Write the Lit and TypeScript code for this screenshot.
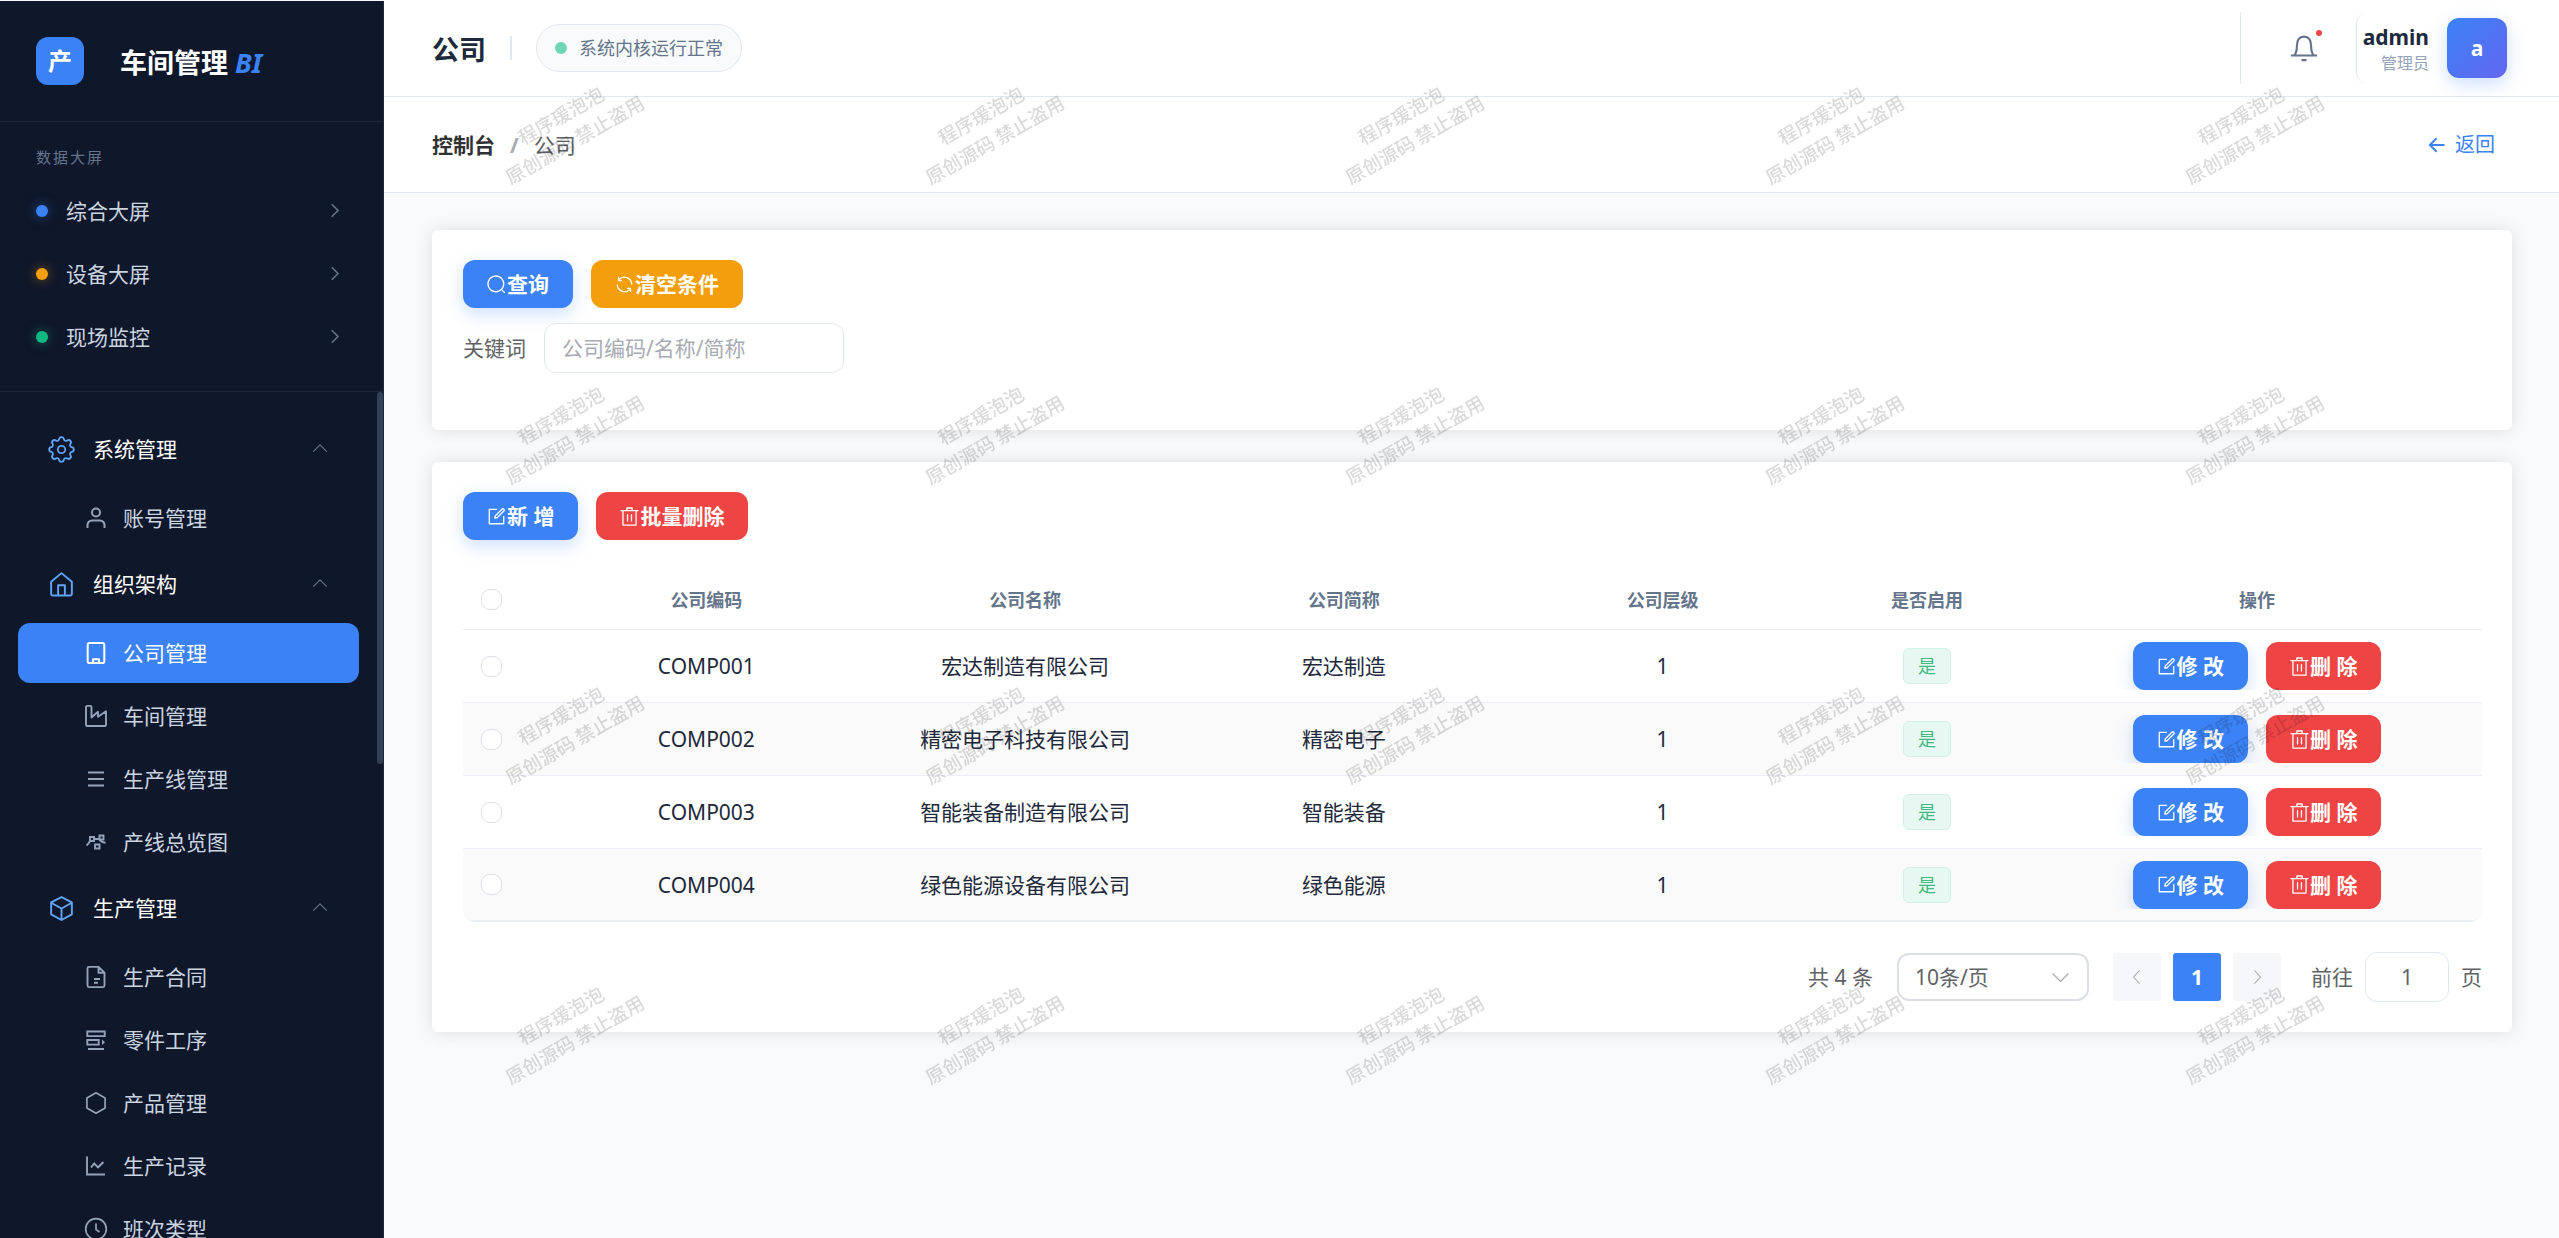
import { LitElement, html, css, svg } from "lit";
import { customElement, property } from "lit/decorators.js";
import { classMap } from "lit/directives/class-map.js";

const s = (body: unknown, box = "0 0 24 24") =>
  html`<svg viewBox=${box} fill="none" stroke="currentColor" aria-hidden="true">${body}</svg>`;
const e = (body: unknown) =>
  html`<svg viewBox="0 0 1024 1024" fill="currentColor" aria-hidden="true">${body}</svg>`;

// Eight rounded lobes joined by shallow concave arcs.
const gearPath = () => {
  const at = (deg: number) => {
    const a = (deg * Math.PI) / 180;
    return `${(12 + 9.3 * Math.cos(a)).toFixed(2)} ${(12 + 9.3 * Math.sin(a)).toFixed(2)}`;
  };
  let d = `M${at(-13)}`;
  for (let k = 0; k < 8; k++) {
    d += `A2.100 2.100 0 0 1 ${at(k * 45 + 13)}A1.900 1.900 0 0 0 ${at(k * 45 + 32)}`;
  }
  return d + "Z";
};

const icons: Record<string, unknown> = {
  gear: s(svg`<g stroke-width="1.6" stroke-linejoin="round"><circle cx="12" cy="12" r="3.3"/><path d=${gearPath()}/></g>`),
  home: s(svg`<path stroke-width="1.7" stroke-linejoin="round" d="M2.800 9.600 12 1.900l9.200 7.700V20.500a1.300 1.300 0 0 1-1.300 1.300H4.100a1.300 1.300 0 0 1-1.300-1.300ZM9 21.500V12.700h6v8.800"/>`),
  cube: s(svg`<path stroke-width="1.700" stroke-linejoin="round" d="M12 1.800 21.200 6.500v10.700L12 22.200 2.800 17.200V6.500ZM2.800 6.900 12 12l9.200-5.100M12 12v10"/>`),
  user: s(svg`<g stroke-width="2"><circle cx="12" cy="6.500" r="4"/><path d="M3.500 22v-3a4.500 4.500 0 0 1 4.500-4.500h8a4.500 4.500 0 0 1 4.500 4.500v3"/></g>`),
  office: s(svg`<path stroke-width="2" stroke-linejoin="round" d="M5.500 2h13a1.800 1.800 0 0 1 1.800 1.800v16.400a1.800 1.800 0 0 1-1.800 1.800h-13a1.800 1.800 0 0 1-1.800-1.800V3.800A1.800 1.800 0 0 1 5.500 2ZM9 21.500v-3.300h6v3.300"/>`),
  factory: s(svg`<path stroke-width="1.900" stroke-linejoin="round" d="M3.300 1.900h2.900a1.300 1.300 0 0 1 1.300 1.300v10.300L14 7.800v5l8-5.600v13.500a1.300 1.300 0 0 1-1.300 1.300H3.300A1.300 1.300 0 0 1 2 20.700V3.200a1.300 1.300 0 0 1 1.300-1.300Z"/>`),
  lines: s(svg`<path stroke-width="1.900" d="M4 5.500h16M4 12h16M4 18.500h16"/>`),
  flow: s(svg`<g stroke-width="1.900"><path d="M6 7h4v4H6ZM15.500 5.500h4v4h-4ZM11 14.500h4.500v4H11ZM10 9h5.500M6 11q-1.500 3-3.500 4.500M15 9.500q3 3 6.500 3.300"/></g>`),
  doc: s(svg`<path stroke-width="1.900" stroke-linejoin="round" d="M14.500 1.900H5a1.500 1.500 0 0 0-1.500 1.500v17.200A1.500 1.500 0 0 0 5 22.100h14a1.500 1.500 0 0 0 1.500-1.500V7.700Zm0 0v5.800h6M10 14h6M10 17.800h4"/>`),
  rows: s(svg`<g stroke-width="1.900"><path d="M3.300 3.500h17.400v4.600H3.300ZM3.300 12h11.400v4.600H3.300ZM4 21h16"/><path d="M18 11.500 21 14.300 18 17Z" fill="currentColor" stroke="none"/></g>`),
  hex: s(svg`<path stroke-width="1.700" stroke-linejoin="round" d="M12 1.800 21.100 6.900v10.200L12 22.200 2.900 17.100V6.900Z"/>`),
  trend: s(svg`<path stroke-width="1.900" d="M3 2.500V20.500H21M7 13.500 10.200 9.500l3.800 3.800L19.500 8"/>`),
  clock: s(svg`<g stroke-width="1.700"><circle cx="12" cy="12" r="10.300"/><path d="M12 6.500v6l3.500 2.500"/></g>`),
  up: s(svg`<path stroke-width="1.500" d="M3 15.500 12 6.500l9 9"/>`),
  down: s(svg`<path stroke-width="1.500" d="M3 7.500l9 9 9-9"/>`),
  left: s(svg`<path stroke-width="1.500" d="M15.500 3 7.500 12l8 9"/>`),
  right: s(svg`<path stroke-width="1.500" d="M8.500 3l8 9-8 9"/>`),
  chevron: s(svg`<path stroke-width="2.600" d="M6 2l10 10L6 22"/>`),
  back: s(svg`<path stroke-width="2.600" d="M22 12H3M11.500 3 2.500 12l9 9"/>`),
  bell: s(svg`<path stroke-width="1.700" d="M1.500 18H22.500M4 18Q6.300 15.800 6.300 10.500 6.300 2.900 12 2.900T17.700 10.500Q17.700 15.800 20 18M10 21.700h4"/>`),
  search: e(svg`<path d="m795.904 750.72 124.992 124.928a32 32 0 0 1-45.248 45.248L750.656 795.904a416 416 0 1 1 45.248-45.248zM480 832a352 352 0 1 0 0-704 352 352 0 0 0 0 704z"/>`),
  refresh: e(svg`<path d="M771.776 794.880A384 384 0 0 1 128 512h64a320 320 0 0 0 555.712 216.448H654.720a32 32 0 1 1 0-64h149.056a32 32 0 0 1 32 32v148.928a32 32 0 1 1-64 0v-50.560zM276.288 295.616h92.992a32 32 0 0 1 0 64H220.160a32 32 0 0 1-32-32V178.560a32 32 0 0 1 64 0v50.560A384 384 0 0 1 896.128 512h-64a320 320 0 0 0-555.776-216.384z"/>`),
  edit: e(svg`<path d="M832 512a32 32 0 1 1 64 0v352a32 32 0 0 1-32 32H160a32 32 0 0 1-32-32V160a32 32 0 0 1 32-32h352a32 32 0 0 1 0 64H192v640h640z"/><path d="m469.952 554.240 52.800-7.552L847.104 222.400a32 32 0 1 0-45.248-45.248L477.440 501.440l-7.552 52.800zm422.400-422.400a96 96 0 0 1 0 135.808l-331.840 331.840a32 32 0 0 1-18.112 9.088L436.800 623.680a32 32 0 0 1-36.224-36.224l15.104-105.600a32 32 0 0 1 9.024-18.112l331.904-331.840a96 96 0 0 1 135.744 0z"/>`),
  trash: e(svg`<path d="M160 256H96a32 32 0 0 1 0-64h256V95.936a32 32 0 0 1 32-32h256a32 32 0 0 1 32 32V192h256a32 32 0 1 1 0 64h-64v672a32 32 0 0 1-32 32H192a32 32 0 0 1-32-32zm448-64v-64H416v64zM224 896h576V256H224zm192-128a32 32 0 0 1-32-32V416a32 32 0 0 1 64 0v320a32 32 0 0 1-32 32zm192 0a32 32 0 0 1-32-32V416a32 32 0 0 1 64 0v320a32 32 0 0 1-32 32z"/>`),
};

const base = css`
  :host {
    font-family: "Noto Sans", "Noto Sans CJK SC", sans-serif;
    font-size: 21px;
    line-height: 30px;
  }
  *, *::before, *::after { box-sizing: border-box; }
  a { color: inherit; text-decoration: none; }
  button, input, select { font: inherit; color: inherit; margin: 0; }
  svg { display: block; width: 100%; height: 100%; }
  .icon { flex: none; width: 21px; height: 21px; }
`;

@customElement("app-button")
class AppButton extends LitElement {
  @property() kind = "primary";
  @property() icon = "";
  static styles = [base, css`
    :host { display: inline-flex; }
    button {
      display: flex; align-items: center; height: 48px; padding: 0 24px 0 23px;
      border: 0; border-radius: 12px; color: #fff; font-weight: 700;
      white-space: nowrap; cursor: pointer;
    }
    .primary { background: #3b82f6; box-shadow: 0 6px 18px rgba(59, 130, 246, 0.25); }
    .warning { background: #f59e0b; }
    .danger { background: #ef4444; }
  `];
  render() {
    return html`<button type="button" class=${this.kind}><span class="icon">${icons[this.icon]}</span><slot></slot></button>`;
  }
}

interface Entry { label: string; icon: string; active?: boolean }
const screens = [
  { label: "综合大屏", tone: "blue" },
  { label: "设备大屏", tone: "amber" },
  { label: "现场监控", tone: "green" },
];
const groups: { label: string; icon: string; items: Entry[] }[] = [
  { label: "系统管理", icon: "gear", items: [{ label: "账号管理", icon: "user" }] },
  { label: "组织架构", icon: "home", items: [
    { label: "公司管理", icon: "office", active: true },
    { label: "车间管理", icon: "factory" },
    { label: "生产线管理", icon: "lines" },
    { label: "产线总览图", icon: "flow" },
  ] },
  { label: "生产管理", icon: "cube", items: [
    { label: "生产合同", icon: "doc" },
    { label: "零件工序", icon: "rows" },
    { label: "产品管理", icon: "hex" },
    { label: "生产记录", icon: "trend" },
    { label: "班次类型", icon: "clock" },
  ] },
];

@customElement("app-sidebar")
class AppSidebar extends LitElement {
  static styles = [base, css`
    :host {
      display: flex; flex-direction: column; min-height: 0;
      background: #0f172a; border-right: 1px solid #1e293b; color: #cbd5e1;
    }
    .brand {
      flex: none; display: flex; align-items: center; gap: 36px; height: 121px;
      padding: 0 36px; border-bottom: 1px solid #1e293b;
    }
    .logo {
      display: grid; place-items: center; width: 48px; height: 48px;
      border-radius: 12px; background: #3b82f6; color: #fff; font-size: 24px; font-weight: 700;
    }
    .name { padding-top: 3px; font-size: 27px; font-weight: 700; color: #fff; white-space: nowrap; }
    .name em { color: #3b82f6; }
    .screens { flex: none; padding: 20px 36px 23px; border-bottom: 1px solid #1e293b; }
    .caption { margin: 0 0 7px; font-size: 15px; font-weight: 400; letter-spacing: 2px; color: #64748b; }
    .screen { display: flex; align-items: center; gap: 18px; height: 63px; }
    .dot { width: 12px; height: 12px; border-radius: 50%; background: currentColor; box-shadow: 0 0 12px color-mix(in srgb, currentColor 50%, transparent); }
    .dot.blue { color: #3b82f6; }
    .dot.amber { color: #f59e0b; }
    .dot.green { color: #10b981; }
    .go { width: 15px; height: 15px; margin-left: auto; margin-right: 4px; color: #64748b; }
    .menu { flex: 1; min-height: 0; display: flex; overflow: hidden; }
    .tree { flex: 1; padding: 24px 18px 0; }
    .bar { flex: none; width: 6px; height: 372px; border-radius: 3px; background: #334155; }
    .group {
      display: flex; align-items: center; width: 100%; height: 66px; margin-bottom: 6px;
      padding: 0 30px; border: 0; background: none; color: #fff;
    }
    .group .lead { width: 27px; height: 27px; margin-right: 18px; color: #60a5fa; }
    .group .fold { width: 18px; height: 18px; margin-left: auto; color: #64748b; }
    .item {
      display: flex; align-items: center; gap: 15px; height: 60px; margin-bottom: 3px;
      padding-left: 66px; border-radius: 12px;
    }
    .item .icon { width: 24px; height: 24px; color: #94a3b8; }
    .item.active { background: #3b82f6; color: #fff; }
    .item.active .icon { color: #fff; }
  `];
  render() {
    return html`
      <div class="brand"><span class="logo">产</span><span class="name">车间管理 <em>BI</em></span></div>
      <div class="screens">
        <h2 class="caption">数据大屏</h2>
        ${screens.map((x) => html`<a class="screen" href="#"><span class="dot ${x.tone}"></span>${x.label}<span class="go">${icons.chevron}</span></a>`)}
      </div>
      <nav class="menu">
        <div class="tree">
          ${groups.map((g) => html`
            <button class="group" type="button" aria-expanded="true"><span class="lead">${icons[g.icon]}</span>${g.label}<span class="fold">${icons.up}</span></button>
            ${g.items.map((i) => html`<a href="#" class=${classMap({ item: true, active: !!i.active })}><span class="icon">${icons[i.icon]}</span>${i.label}</a>`)}`)}
        </div>
        <div class="bar"></div>
      </nav>`;
  }
}

@customElement("app-header")
class AppHeader extends LitElement {
  static styles = [base, css`
    :host { display: block; background: #fff; }
    .top, .crumbs { display: flex; align-items: center; padding-left: 48px; border-bottom: 1px solid #e2e8f0; }
    .top { height: 97px; padding-right: 52px; }
    .crumbs { height: 96px; padding-right: 64px; }
    h1 { margin: 0; padding-top: 3px; font-size: 27px; color: #1e293b; }
    .rule { width: 2px; height: 24px; margin: 0 24px; background: #e2e8f0; }
    .status {
      display: flex; align-items: center; gap: 12px; height: 48px; padding: 0 18px;
      border: 1px solid #e2e8f0; border-radius: 24px; background: #f8fafc;
      font-size: 18px; color: #64748b;
    }
    .pulse { width: 12px; height: 12px; border-radius: 50%; background: #70d5b3; }
    .tools { display: flex; align-items: center; height: 72px; margin-left: auto; border-left: 1px solid #e2e8f0; }
    .bell { position: relative; width: 30px; height: 30px; margin: 0 37px 0 48px; padding: 0; border: 0; background: none; color: #64748b; }
    .bell::after {
      content: ""; position: absolute; top: -3px; right: -3px; width: 6px; height: 6px;
      border-radius: 50%; background: #ef4444;
    }
    .user {
      display: flex; align-items: center; gap: 18px; height: 72px; padding-left: 6px;
      border-left: 1px solid #e2e8f0; border-radius: 12px; text-align: right;
    }
    .who { display: flex; flex-direction: column; padding-top: 3px; }
    .who strong { line-height: 27px; color: #1e293b; }
    .who span { font-size: 16px; line-height: 24px; color: #94a3b8; }
    .avatar {
      display: grid; place-items: center; width: 60px; height: 60px; border-radius: 12px;
      background: linear-gradient(135deg, #3b82f6, #6366f1); color: #fff; font-weight: 700;
      box-shadow: 0 6px 18px rgba(59, 130, 246, 0.25);
    }
    .crumbs strong { color: #303133; }
    .slash { margin: 0 15px; color: #a8abb2; font-weight: 700; }
    .here { color: #606266; }
    .back { display: flex; align-items: center; gap: 9px; margin-left: auto; font-size: 20px; color: #3b82f6; }
    .back .icon { width: 18px; height: 18px; }
  `];
  render() {
    return html`
      <div class="top">
        <h1>公司</h1><span class="rule"></span>
        <span class="status"><span class="pulse"></span>系统内核运行正常</span>
        <div class="tools">
          <button class="bell" type="button" aria-label="通知">${icons.bell}</button>
          <div class="user">
            <span class="who"><strong>admin</strong><span>管理员</span></span>
            <span class="avatar">a</span>
          </div>
        </div>
      </div>
      <nav class="crumbs">
        <strong>控制台</strong><span class="slash">/</span><span class="here">公司</span>
        <a class="back" href="#"><span class="icon">${icons.back}</span>返回</a>
      </nav>`;
  }
}

const companies = [
  { code: "COMP001", name: "宏达制造有限公司", short: "宏达制造", level: 1 },
  { code: "COMP002", name: "精密电子科技有限公司", short: "精密电子", level: 1 },
  { code: "COMP003", name: "智能装备制造有限公司", short: "智能装备", level: 1 },
  { code: "COMP004", name: "绿色能源设备有限公司", short: "绿色能源", level: 1 },
];

@customElement("company-page")
class CompanyPage extends LitElement {
  static styles = [base, css`
    :host { display: flex; flex-direction: column; gap: 32px; padding: 37px 47px 37px 48px; color: #606266; }
    .card {
      padding: 30px 30px 30px 31px; border-radius: 6px; background: #fff;
      box-shadow: 0 0 18px rgba(0, 0, 0, 0.12);
    }
    .query { min-height: 200px; }
    .actions { display: flex; gap: 18px; }
    .field { display: flex; align-items: center; gap: 18px; margin-top: 15px; }
    .field input {
      width: 300px; height: 50px; padding: 0 17px; border: 1px solid #e2e8f0;
      border-radius: 12px; background: #fff; outline: 0;
    }
    .field input::placeholder { color: #a8abb2; opacity: 1; }
    table {
      width: 100%; margin-top: 30px; table-layout: fixed; border-collapse: separate;
      border-spacing: 0; text-align: center; color: #1e293b;
      border-radius: 0 0 12px 12px; overflow: hidden; border-bottom: 1px solid #ebeef5;
    }
    th, td { padding: 0 18px; border-bottom: 1px solid #ebeef5; }
    th { height: 60px; font-size: 18px; color: #64748b; }
    td { height: 73px; }
    tbody tr:last-child td { height: 72px; }
    tbody tr:nth-child(even) { background: #fafafa; }
    .pick { width: 84px; text-align: left; }
    .enabled { width: 210px; }
    .ops { width: 450px; }
    .pick input {
      appearance: none; display: block; width: 21px; height: 21px;
      border: 1px solid #dcdfe6; border-radius: 9px; background: #fff;
    }
    .tag {
      display: inline-block; padding: 0 14px; border: 1px solid #cff1e6; border-radius: 6px;
      background: #e7f8f2; color: #42b883; font-size: 18px; line-height: 34px;
      vertical-align: middle;
    }
    .pair { display: flex; justify-content: center; gap: 18px; overflow: hidden; }
    .pager { display: flex; align-items: center; justify-content: flex-end; margin-top: 30px; }
    .total { margin-right: 24px; }
    .size { position: relative; display: flex; width: 192px; margin-right: 24px; }
    .size select {
      appearance: none; width: 100%; height: 48px; padding: 0 16px; border: 2px solid #dcdfe6;
      border-radius: 12px; background: #fff;
    }
    .size .icon { position: absolute; right: 18px; top: 14px; color: #a8abb2; pointer-events: none; }
    .page {
      display: grid; place-items: center; width: 48px; height: 48px; padding: 0; border: 0;
      border-radius: 3px; background: #f5f7fa; color: #a8abb2;
    }
    .pages { display: flex; gap: 12px; margin-right: 30px; }
    .page.current { background: #3b82f6; color: #fff; font-weight: 700; }
    .page .icon { width: 18px; height: 18px; }
    .jump { display: flex; align-items: center; gap: 12px; }
    .jump input {
      width: 84px; height: 50px; padding: 0; border: 1px solid #e2e8f0; border-radius: 12px;
      background: #fff; text-align: center;
    }
  `];
  render() {
    return html`
      <section class="card query">
        <div class="actions">
          <app-button icon="search">查询</app-button>
          <app-button kind="warning" icon="refresh">清空条件</app-button>
        </div>
        <div class="field"><label for="keyword">关键词</label><input id="keyword" type="text" placeholder="公司编码/名称/简称"></div>
      </section>
      <section class="card">
        <div class="actions">
          <app-button icon="edit">新 增</app-button>
          <app-button kind="danger" icon="trash">批量删除</app-button>
        </div>
        <table>
          <thead><tr>
            <th class="pick"><input type="checkbox" aria-label="全选"></th>
            <th>公司编码</th><th>公司名称</th><th>公司简称</th><th>公司层级</th>
            <th class="enabled">是否启用</th><th class="ops">操作</th>
          </tr></thead>
          <tbody>
            ${companies.map((c) => html`<tr>
              <td class="pick"><input type="checkbox" aria-label=${c.name}></td>
              <td>${c.code}</td><td>${c.name}</td><td>${c.short}</td><td>${c.level}</td>
              <td><span class="tag">是</span></td>
              <td><div class="pair"><app-button icon="edit">修 改</app-button><app-button kind="danger" icon="trash">删 除</app-button></div></td>
            </tr>`)}
          </tbody>
        </table>
        <div class="pager">
          <span class="total">共 4 条</span>
          <span class="size"><select aria-label="每页条数"><option>10条/页</option></select><span class="icon">${icons.down}</span></span>
          <div class="pages">
            <button class="page" type="button" aria-label="上一页"><span class="icon">${icons.left}</span></button>
            <button class="page current" type="button">1</button>
            <button class="page" type="button" aria-label="下一页"><span class="icon">${icons.right}</span></button>
          </div>
          <label class="jump">前往<input type="text" value="1">页</label>
        </div>
      </section>`;
  }
}

@customElement("app-root")
class AppRoot extends LitElement {
  static styles = [base, css`
    :host {
      display: grid; grid-template-columns: 384px minmax(0, 1fr); position: relative;
      height: 100vh; overflow: hidden; background: #f8fafc;
    }
    app-sidebar { margin-top: 1px; }
    main { position: relative; overflow: hidden; }
    .watermark { position: absolute; inset: 0; pointer-events: none; }
    .watermark text {
      font-family: "Noto Sans CJK SC", sans-serif; font-size: 19px; font-weight: 500;
      text-anchor: middle; fill: #000; fill-opacity: 0.15; stroke: none;
    }
  `];
  render() {
    return html`
      <app-sidebar></app-sidebar>
      <main>
        <app-header></app-header>
        <company-page></company-page>
        <svg class="watermark" aria-hidden="true">
          <defs>
            <pattern id="mark" width="420" height="300" patternUnits="userSpaceOnUse">
              <g transform="translate(184 128) rotate(-30)">
                <text y="-7">程序瑗泡泡</text>
                <text y="21">原创源码 禁止盗用</text>
              </g>
            </pattern>
          </defs>
          <rect width="100%" height="100%" fill="url(#mark)" stroke="none"/>
        </svg>
      </main>`;
  }
}
